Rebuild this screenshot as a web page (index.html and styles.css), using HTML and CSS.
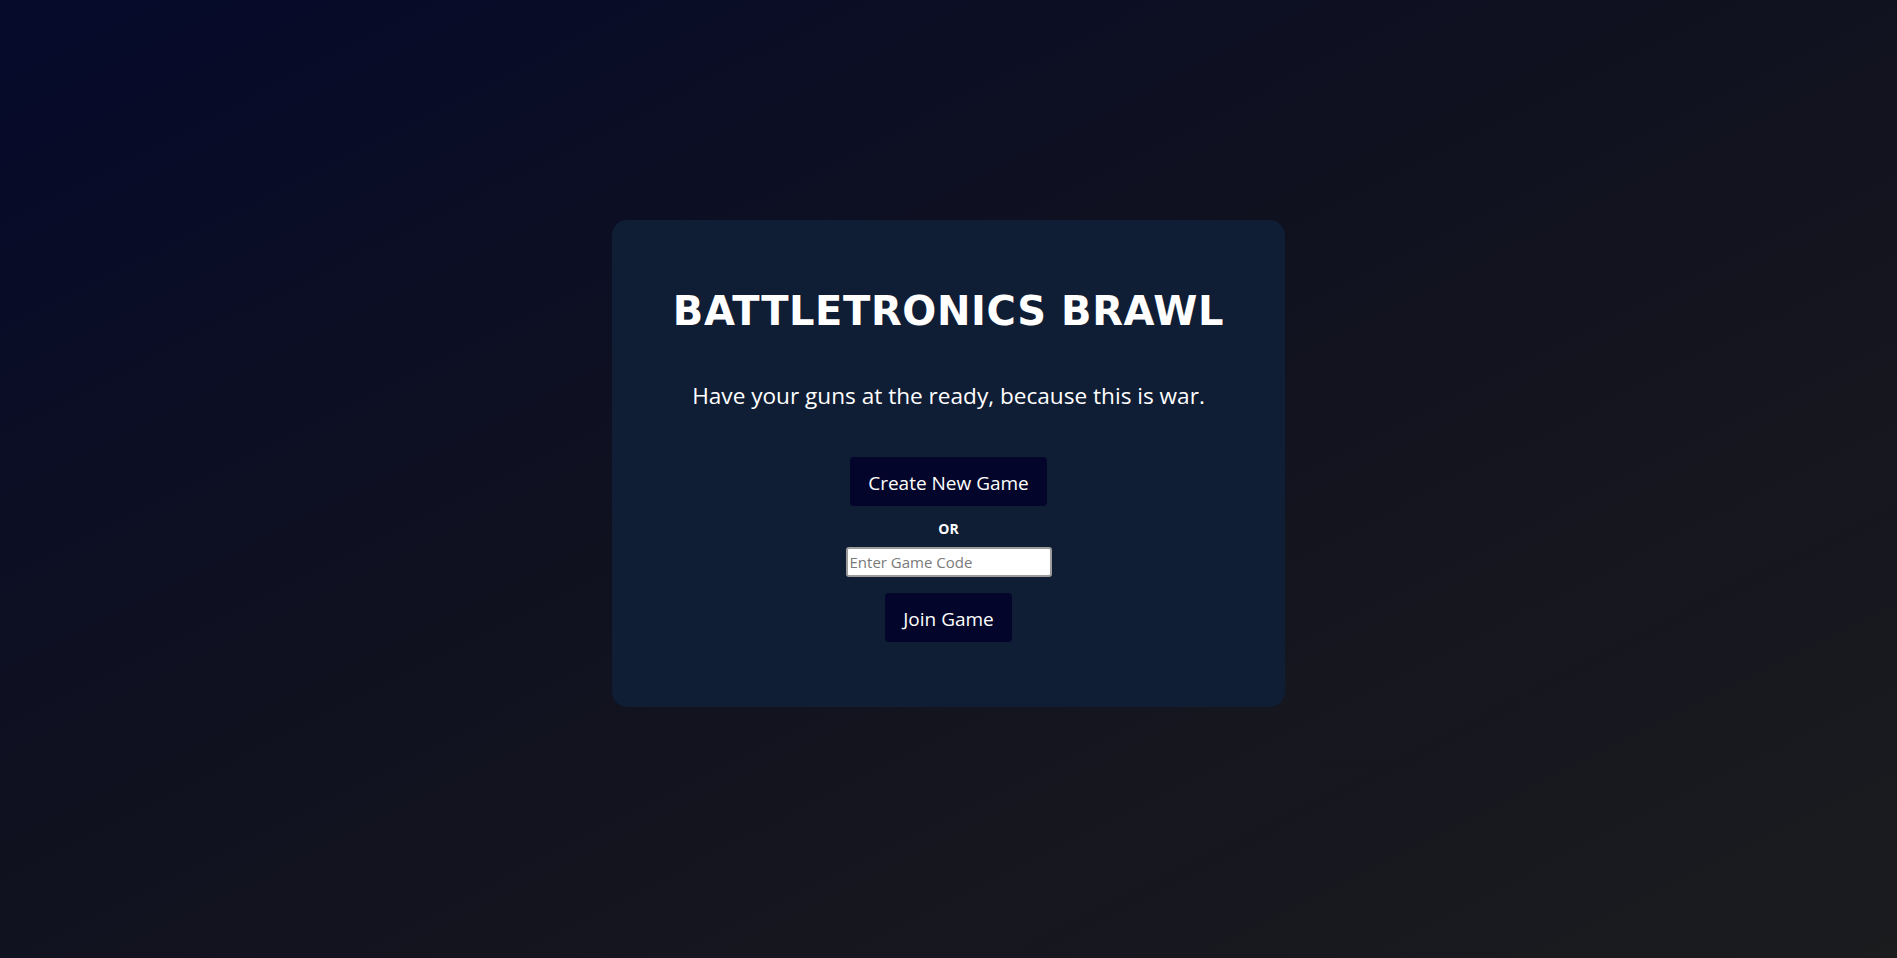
FILE: index.html
```html
<!DOCTYPE html>
<html lang="en">
<head>
<meta charset="utf-8">
<title>Battletronics Brawl</title>
<link rel="stylesheet" href="styles.css">
</head>
<body>
<main class="page">
  <section class="card">
    <h1 class="title">BATTLETRONICS BRAWL</h1>
    <p class="tagline">Have your guns at the ready, because this is war.</p>
    <button class="btn btn-create">Create New Game</button>
    <div class="or">OR</div>
    <input class="code-input" type="text" placeholder="Enter Game Code">
    <button class="btn btn-join">Join Game</button>
  </section>
</main>
</body>
</html>
```

FILE: styles.css
```css
html, body {
  margin: 0;
  padding: 0;
  height: 100%;
}

body {
  background: linear-gradient(to bottom right, #050a2b 0%, #10111f 45%, #1b1c1e 100%);
  font-family: "Open Sans", "Noto Sans", sans-serif;
  color: #ffffff;
}

.page {
  box-sizing: border-box;
  height: 100vh;
  padding-bottom: 31px;
  display: flex;
  align-items: center;
  justify-content: center;
}

.card {
  box-sizing: border-box;
  width: 673px;
  height: 487px;
  background: #0f1d35;
  border-radius: 15px;
  padding-top: 67px;
  display: flex;
  flex-direction: column;
  align-items: center;
}

.title {
  margin: 0;
  font-family: "DejaVu Sans", Verdana, sans-serif;
  font-weight: bold;
  font-size: 40px;
  line-height: 48px;
  letter-spacing: 0.6px;
}

.tagline {
  margin: 47px 0 0;
  font-size: 22.6px;
  line-height: 28px;
}

.btn {
  background: #03062a;
  color: #ffffff;
  border: none;
  border-radius: 4px;
  font-family: "Open Sans", "Noto Sans", sans-serif;
  font-size: 19px;
  line-height: 25px;
  padding: 14px 18px 10px;
  cursor: pointer;
}

.btn-create {
  margin-top: 47px;
}

.or {
  margin-top: 13px;
  font-weight: bold;
  font-size: 14px;
  line-height: 20px;
}

.code-input {
  box-sizing: border-box;
  margin-top: 8px;
  width: 206px;
  height: 30px;
  border: 2px solid #9c9c9c;
  border-radius: 3px;
  background: #ffffff;
  padding: 0 2px;
  font-family: "Open Sans", "Noto Sans", sans-serif;
  font-size: 15px;
  color: #000;
}

.code-input::placeholder {
  color: #7a7a7a;
}

.btn-join {
  margin-top: 16px;
}
```
